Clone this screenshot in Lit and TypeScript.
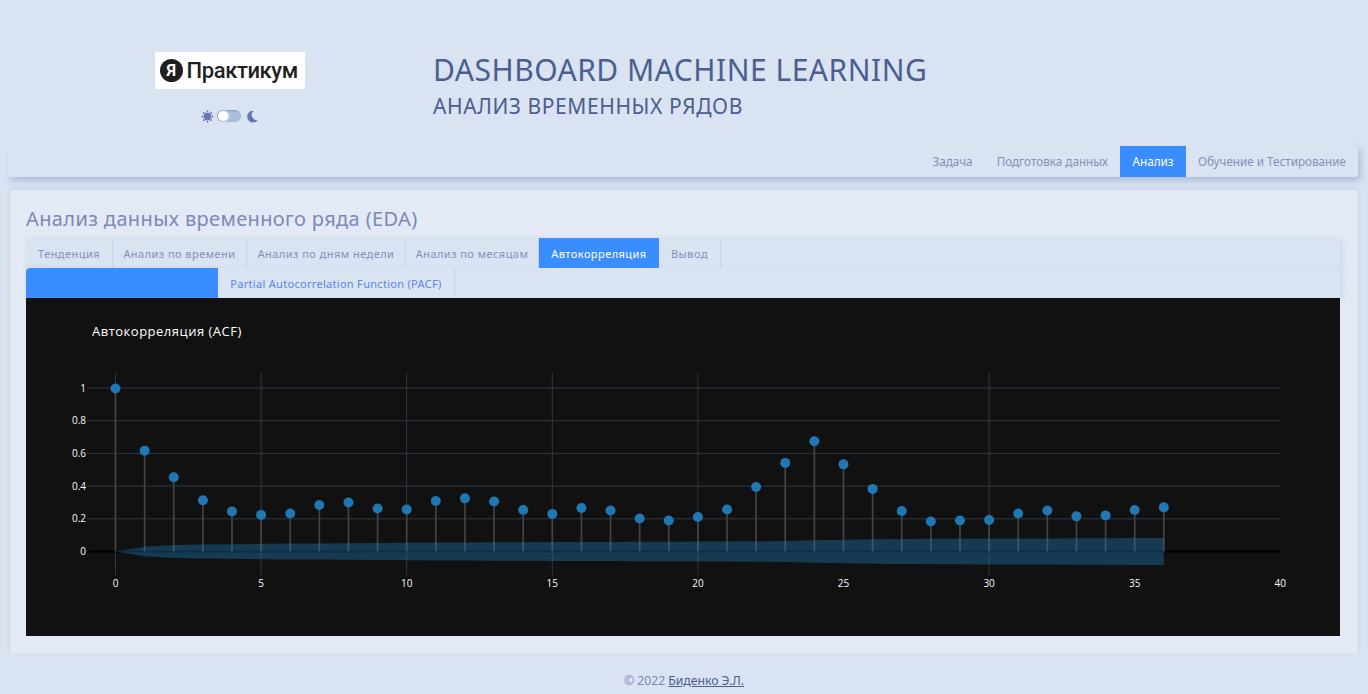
import { LitElement, html, css, svg } from "lit";
import { customElement } from "lit/decorators.js";

// acf values, read off the plot
const ACF = [
  1, 0.62, 0.457, 0.316, 0.248, 0.227, 0.236, 0.288, 0.303, 0.266, 0.26, 0.312,
  0.328, 0.309, 0.257, 0.233, 0.269, 0.254, 0.205, 0.193, 0.214, 0.26, 0.398,
  0.545, 0.677, 0.536, 0.386, 0.251, 0.187, 0.193, 0.196, 0.236, 0.254, 0.218,
  0.224, 0.257, 0.273,
];
// half width of the confidence band, in pixels, per lag
const BAND = [
  0, 4.7, 6.5, 7, 7.3, 7.7, 7.9, 8.1, 8.3, 8.5, 8.7, 8.9, 9.1, 9.2, 9.3, 9.4,
  9.5, 9.6, 9.7, 9.8, 9.9, 10, 10.2, 10.6, 11.2, 11.8, 12.3, 12.6, 12.7, 12.8,
  12.9, 13, 13.1, 13.2, 13.3, 13.4, 13.5,
];

const OFFSET_X = 89.5;
const STEP_X = 29.12;
const ZERO_Y = 253.5;
const STEP_Y = 163.5;

const px = (lag: number) => OFFSET_X + lag * STEP_X;
const py = (v: number) => ZERO_Y - v * STEP_Y;

@customElement("acf-chart")
export class AcfChart extends LitElement {
  static styles = css`
    :host {
      display: block;
      height: 338px;
      background: #111111;
    }
    svg {
      display: block;
    }
    .title {
      font: 13px "Open Sans", "Noto Sans", sans-serif;
      letter-spacing: 0.5px;
      fill: #ffffff;
    }
    .tick {
      font: 10px "Open Sans", "Noto Sans", sans-serif;
      fill: #f7f9fc;
    }
    .grid {
      stroke: #2c3947;
      stroke-width: 1;
    }
    .zero {
      stroke: #000000;
      stroke-width: 2;
    }
    .stem {
      stroke: #444444;
      stroke-width: 1.7;
    }
    .band {
      fill: rgba(31, 119, 180, 0.4);
    }
    .dot {
      fill: #1f77b4;
    }
  `;

  render() {
    const upper = BAND.map((b, i) => `${px(i)},${ZERO_Y - b}`);
    const lower = BAND.map((b, i) => `${px(i)},${ZERO_Y + b}`).reverse();
    return html`
      <svg width="1314" height="338" viewBox="0 0 1314 338">
        <text class="title" x="66" y="38">Автокорреляция (ACF)</text>
        ${[0, 5, 10, 15, 20, 30].map(
          (t) => svg`
            <line class="grid" x1=${px(t)} x2=${px(t)} y1="75" y2="277"></line>
          `
        )}
        ${[0, 5, 10, 15, 20, 25, 30, 35, 40].map(
          (t) => svg`
            <text class="tick" x=${px(t)} y="289" text-anchor="middle">${t}</text>
          `
        )}
        ${[0.2, 0.4, 0.6, 0.8, 1].map(
          (v) => svg`
            <line class="grid" x1="61" x2="1254" y1=${py(v)} y2=${py(v)}></line>
          `
        )}
        ${[0, 0.2, 0.4, 0.6, 0.8, 1].map(
          (v) => svg`
            <text class="tick" x="60" y=${py(v) + 3.5} text-anchor="end">${v}</text>
          `
        )}
        <line class="zero" x1="61" x2="1254" y1=${ZERO_Y} y2=${ZERO_Y}></line>
        ${ACF.map(
          (v, i) => svg`
            <line class="stem" x1=${px(i)} x2=${px(i)} y1=${py(v)} y2=${ZERO_Y}></line>
          `
        )}
        <polygon class="band" points=${[...upper, ...lower].join(" ")}></polygon>
        ${ACF.map(
          (v, i) => svg`<circle class="dot" cx=${px(i)} cy=${py(v) + 0.5} r="5"></circle>`
        )}
      </svg>
    `;
  }
}

@customElement("app-root")
export class AppRoot extends LitElement {
  static styles = css`
    :host {
      display: block;
      min-height: 694px;
      background: #d9e3f1;
      font-family: "Noto Sans", "Open Sans", sans-serif;
      color: #7d88b8;
    }
    .header {
      display: grid;
      grid-template-columns: 407px 1fr;
      padding: 52px 0 0 26px;
      height: 94px;
    }
    .brand {
      display: flex;
      flex-direction: column;
      align-items: center;
    }
    .logo {
      display: flex;
      align-items: center;
      gap: 4px;
      width: 150px;
      height: 37px;
      padding-left: 5px;
      box-sizing: border-box;
      background: #ffffff;
      color: #1f1f1f;
      font-family: Roboto, sans-serif;
      font-size: 22px;
      font-weight: 500;
      letter-spacing: -0.4px;
    }
    .logo-mark {
      display: flex;
      align-items: center;
      justify-content: center;
      width: 23px;
      height: 23px;
      border-radius: 50%;
      background: #1f1f1f;
      color: #ffffff;
      font-size: 16px;
      font-weight: 700;
      flex: none;
    }
    .theme {
      display: flex;
      align-items: center;
      gap: 3px;
      margin-top: 20px;
      height: 14px;
    }
    .theme svg {
      display: block;
      fill: #6577b3;
    }
    .switch {
      position: relative;
      width: 24px;
      height: 12px;
      border-radius: 6px;
      background: #a9bfdc;
      box-shadow: inset 1px 1px 2px rgba(80, 100, 140, 0.35);
    }
    .switch::after {
      content: "";
      position: absolute;
      left: 1px;
      top: 1px;
      width: 10px;
      height: 10px;
      border-radius: 50%;
      background: #ffffff;
      box-shadow: 1px 0 2px rgba(255, 255, 255, 0.7);
    }
    h1 {
      margin: 0;
      font-size: 30px;
      line-height: 36px;
      font-weight: 400;
      letter-spacing: 0.5px;
      color: #4c5e90;
    }
    h2 {
      margin: 2px 0 0;
      font-size: 21px;
      line-height: 32px;
      font-weight: 400;
      letter-spacing: 0.58px;
      color: #4c5e90;
    }
    .navbar {
      display: flex;
      justify-content: flex-end;
      align-items: stretch;
      height: 31px;
      margin: 0 10px 0 8px;
      border-radius: 3px;
      background: #d9e3f1;
      box-shadow: 2px 3px 7px rgba(120, 145, 190, 0.55),
        -3px -3px 7px rgba(235, 241, 250, 0.7);
    }
    .navbar a {
      display: flex;
      align-items: center;
      padding: 0 12px 1px;
      font-size: 11.7px;
      color: #8790b8;
    }
    .navbar a.active {
      padding: 0 12.5px 1px;
      background: #3a8dff;
      color: #ffffff;
    }
    .card {
      margin: 13px 10px 0;
      height: 464px;
      padding: 16px 18px 0 16px;
      box-sizing: border-box;
      border-radius: 4px;
      background: #e3eaf5;
      box-shadow: 0 -1px 4px rgba(190, 205, 230, 0.6);
    }
    h3 {
      margin: 0;
      font-size: 20px;
      line-height: 26px;
      font-weight: 400;
      letter-spacing: 0.37px;
      color: #7d88b8;
    }
    .tabs {
      display: flex;
      height: 30px;
      margin-top: 6px;
      background: #d9e3f1;
      border-radius: 4px 4px 0 0;
      box-shadow: 2px 2px 5px rgba(170, 190, 220, 0.5);
    }
    .tabs a {
      display: flex;
      align-items: center;
      justify-content: center;
      box-sizing: border-box;
      font-size: 11px;
      letter-spacing: 0.45px;
      color: #8790b8;
      border-right: 1px solid #c5d3e6;
      white-space: nowrap;
    }
    .tabs a.active {
      background: #3a8dff;
      color: #ffffff;
      border-right: none;
    }
    .subtabs {
      margin-top: 0;
    }
    .subtabs a {
      color: #5b86ea;
      letter-spacing: 0.3px;
    }
    .subtabs a.active {
      border-top-left-radius: 4px;
    }
    .footer {
      padding: 18px 0 3px;
      text-align: center;
      font-size: 12.2px;
      line-height: 18px;
      color: #7d88b8;
    }
    .footer a {
      color: #4c5e90;
      text-decoration: underline;
    }
  `;

  render() {
    return html`
      <div class="header">
        <div class="brand">
          <div class="logo">
            <span class="logo-mark">Я</span>
            <span>Практикум</span>
          </div>
          <div class="theme">
            <svg width="13" height="13" viewBox="0 0 24 24">
              <circle cx="12" cy="12" r="7"></circle>
              <path
                d="M12 0l2.5 4h-5zM12 24l-2.5-4h5zM0 12l4-2.5v5zM24 12l-4 2.5v-5zM3.5 3.5l4.6 1.2-3.4 3.4zM20.5 20.5l-4.6-1.2 3.4-3.4zM20.5 3.5l-1.2 4.6-3.4-3.4zM3.5 20.5l1.2-4.6 3.4 3.4z"
              ></path>
            </svg>
            <div class="switch"></div>
            <svg width="12" height="13" viewBox="0 0 24 24" style="margin-left:2px">
              <path d="M15 0.5a11.8 11.8 0 1 0 8.5 19A11 11 0 0 1 15 0.5z"></path>
            </svg>
          </div>
        </div>
        <div>
          <h1>DASHBOARD MACHINE LEARNING</h1>
          <h2>АНАЛИЗ ВРЕМЕННЫХ РЯДОВ</h2>
        </div>
      </div>

      <nav class="navbar">
        <a>Задача</a>
        <a>Подготовка данных</a>
        <a class="active">Анализ</a>
        <a>Обучение и Тестирование</a>
      </nav>

      <section class="card">
        <h3>Анализ данных временного ряда (EDA)</h3>
        <div class="tabs">
          <a style="width:87px">Тенденция</a>
          <a style="width:134px">Анализ по времени</a>
          <a style="width:159px">Анализ по дням недели</a>
          <a style="width:133px">Анализ по месяцам</a>
          <a class="active" style="width:120px">Автокорреляция</a>
          <a style="width:62px">Вывод</a>
        </div>
        <div class="tabs subtabs">
          <a class="active" style="width:192px"></a>
          <a style="width:237px">Partial Autocorrelation Function (PACF)</a>
        </div>
        <acf-chart></acf-chart>
      </section>

      <footer class="footer">© 2022 <a>Биденко Э.Л.</a></footer>
    `;
  }
}
